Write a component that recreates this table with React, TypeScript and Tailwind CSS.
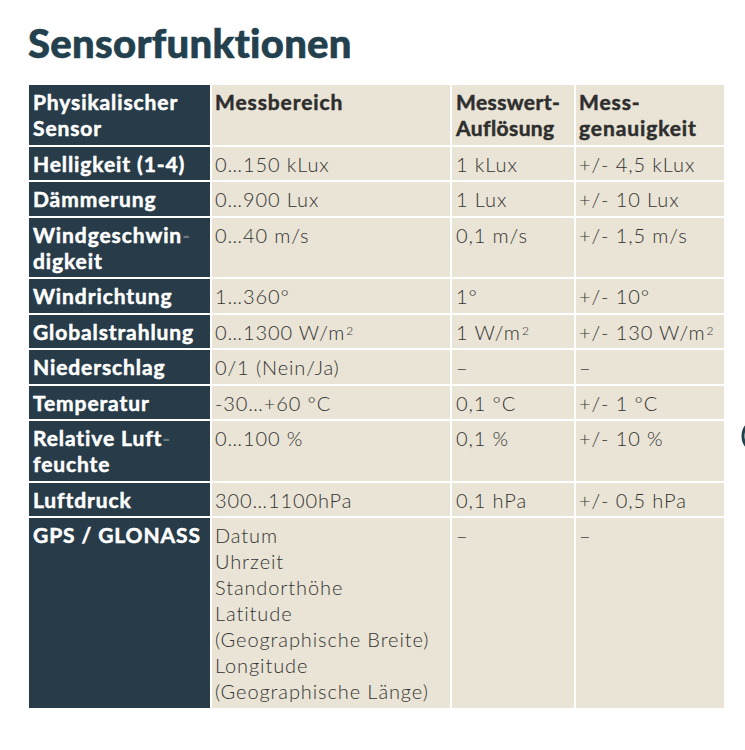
// Datenblatt-Tabelle "Sensorfunktionen"
type Zeile = {
  sensor: React.ReactNode;
  bereich: React.ReactNode;
  aufloesung: React.ReactNode;
  genauigkeit: React.ReactNode;
};

const Trenn = () => <span className="text-[#6b7a82] [-webkit-text-stroke-width:0px]">-</span>;
const Hoch2 = () => <sup className="text-[12px] relative -top-[5px] ml-[1px]">2</sup>;

const zeilen: Zeile[] = [
  { sensor: "Helligkeit (1-4)", bereich: "0…150 kLux", aufloesung: "1 kLux", genauigkeit: "+/- 4,5 kLux" },
  { sensor: "Dämmerung", bereich: "0…900 Lux", aufloesung: "1 Lux", genauigkeit: "+/- 10 Lux" },
  {
    sensor: (
      <>
        Windgeschwin
        <Trenn />
        <br />
        digkeit
      </>
    ),
    bereich: "0…40 m/s",
    aufloesung: "0,1 m/s",
    genauigkeit: "+/- 1,5 m/s",
  },
  { sensor: "Windrichtung", bereich: "1…360°", aufloesung: "1°", genauigkeit: "+/- 10°" },
  {
    sensor: "Globalstrahlung",
    bereich: (
      <>
        0…1300 W/m
        <Hoch2 />
      </>
    ),
    aufloesung: (
      <>
        1 W/m
        <Hoch2 />
      </>
    ),
    genauigkeit: (
      <>
        +/- 130 W/m
        <Hoch2 />
      </>
    ),
  },
  { sensor: "Niederschlag", bereich: "0/1 (Nein/Ja)", aufloesung: "–", genauigkeit: "–" },
  { sensor: "Temperatur", bereich: "-30…+60 °C", aufloesung: "0,1 °C", genauigkeit: "+/- 1 °C" },
  {
    sensor: (
      <>
        Relative Luft
        <Trenn />
        <br />
        feuchte
      </>
    ),
    bereich: "0…100 %",
    aufloesung: "0,1 %",
    genauigkeit: "+/- 10 %",
  },
  { sensor: "Luftdruck", bereich: "300…1100hPa", aufloesung: "0,1 hPa", genauigkeit: "+/- 0,5 hPa" },
  {
    sensor: "GPS / GLONASS",
    bereich: (
      <>
        Datum
        <br />
        Uhrzeit
        <br />
        Standorthöhe
        <br />
        Latitude
        <br />
        (Geographische Breite)
        <br />
        Longitude
        <br />
        (Geographische Länge)
      </>
    ),
    aufloesung: "–",
    genauigkeit: "–",
  },
];

const fett = "text-[21px] font-bold tracking-[0.9px] [-webkit-text-stroke-width:0.5px]";
const dunkel = `bg-[#273c48] text-white ${fett} pl-[4px] pr-0 pt-[4px] pb-[3.5px] whitespace-nowrap`;
const hell =
  "bg-[#e9e4d5] text-[#333333] font-light tracking-[0.9px] pl-[3px] pr-0 pt-[4px] pb-[3.5px] whitespace-nowrap";
const kopf = `bg-[#e9e4d5] text-[#2e2e2e] ${fett} pl-[3px] pr-0 pt-[4px] pb-[3.5px] whitespace-nowrap`;

export default function App() {
  return (
    <div
      className="relative w-[745px] h-[750px] bg-white overflow-hidden"
      style={{ fontFamily: "Lato, 'Open Sans', sans-serif" }}
    >
      <h1 className="pl-[28px] pt-[19px] text-[40px] leading-[48px] font-black text-[#22404d] tracking-[0.3px] [-webkit-text-stroke-width:0.6px]">
        Sensorfunktionen
      </h1>

      <div className="mt-[18px] ml-[29px] w-[695px] grid grid-cols-[181px_238px_122px_148px] gap-[2px] bg-white text-[20px] leading-[26px]">
        <div className={dunkel}>
          Physikalischer
          <br />
          Sensor
        </div>
        <div className={kopf}>Messbereich</div>
        <div className={`${kopf} pl-[4px] !tracking-[0.4px]`}>
          Messwert-
          <br />
          Auflösung
        </div>
        <div className={kopf}>
          Mess-
          <br />
          genauigkeit
        </div>

        {zeilen.map((z, i) => (
          <div key={i} className="contents">
            <div className={dunkel}>{z.sensor}</div>
            <div className={hell}>{z.bereich}</div>
            <div className={`${hell} pl-[4px]`}>{z.aufloesung}</div>
            <div className={hell}>{z.genauigkeit}</div>
          </div>
        ))}
      </div>

      {/* angeschnittenes Symbol am rechten Rand */}
      <svg className="absolute left-[738px] top-[418px]" width="40" height="36" viewBox="0 0 40 36">
        <circle cx="22" cy="18" r="17" fill="none" stroke="#22404d" strokeWidth="3" />
      </svg>
    </div>
  );
}
